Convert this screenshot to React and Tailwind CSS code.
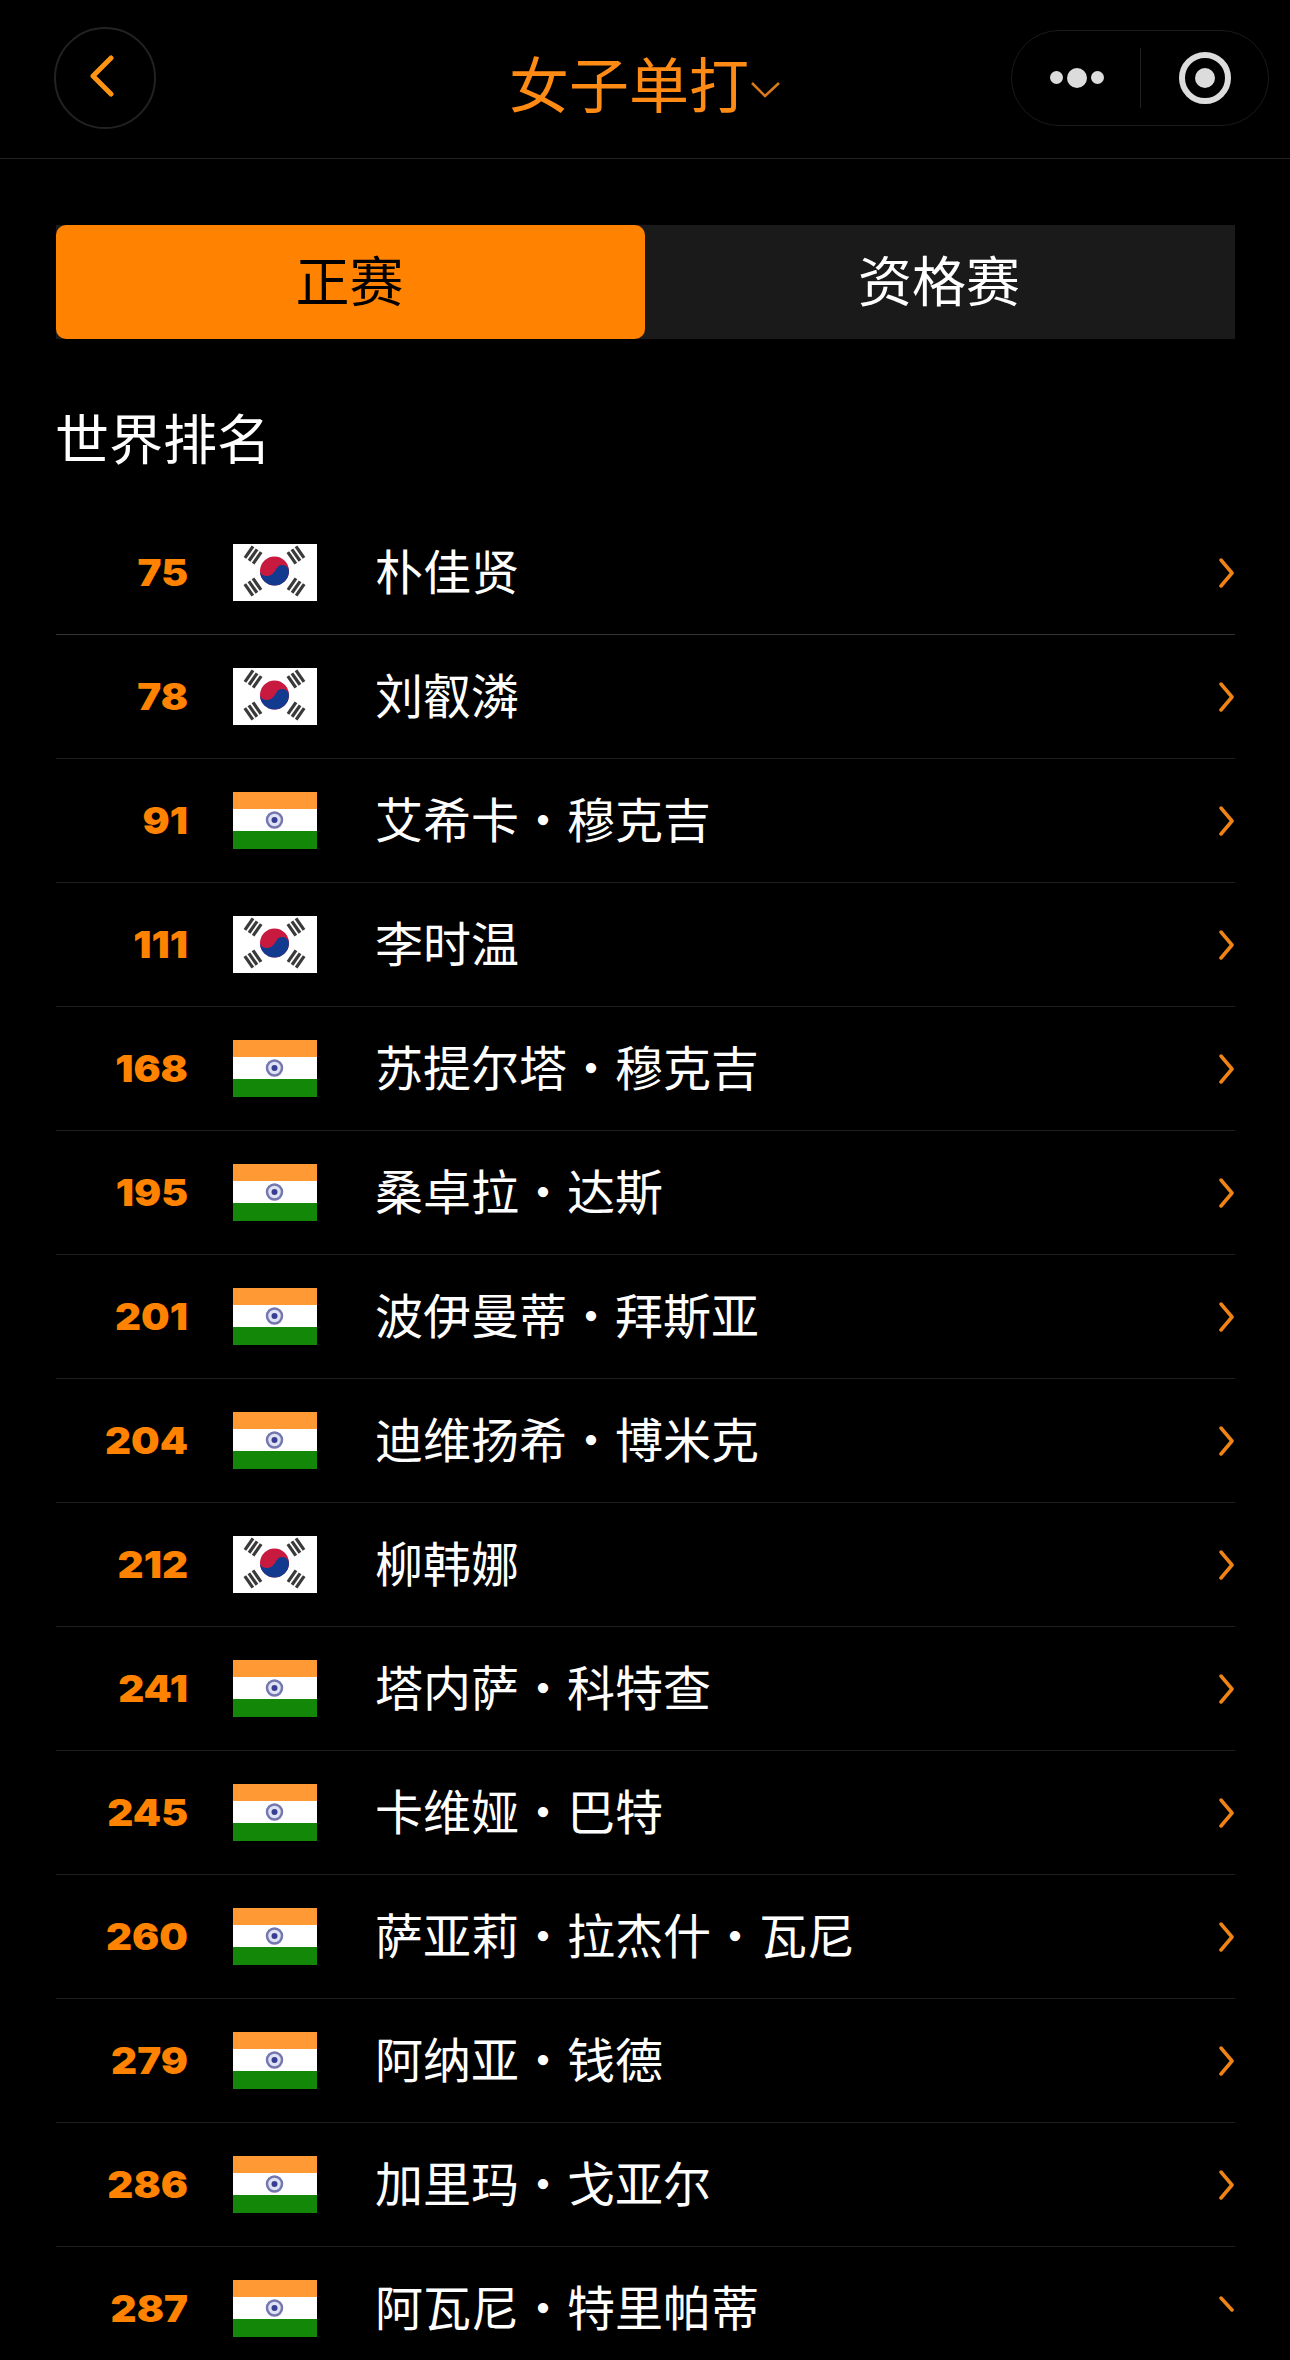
import React from 'react';

const players = [
  { rank: 75, flag: 'kr', name: '朴佳贤' },
  { rank: 78, flag: 'kr', name: '刘叡潾' },
  { rank: 91, flag: 'in', name: '艾希卡 · 穆克吉' },
  { rank: 111, flag: 'kr', name: '李时温' },
  { rank: 168, flag: 'in', name: '苏提尔塔 · 穆克吉' },
  { rank: 195, flag: 'in', name: '桑卓拉 · 达斯' },
  { rank: 201, flag: 'in', name: '波伊曼蒂 · 拜斯亚' },
  { rank: 204, flag: 'in', name: '迪维扬希 · 博米克' },
  { rank: 212, flag: 'kr', name: '柳韩娜' },
  { rank: 241, flag: 'in', name: '塔内萨 · 科特查' },
  { rank: 245, flag: 'in', name: '卡维娅 · 巴特' },
  { rank: 260, flag: 'in', name: '萨亚莉 · 拉杰什 · 瓦尼' },
  { rank: 279, flag: 'in', name: '阿纳亚 · 钱德' },
  { rank: 286, flag: 'in', name: '加里玛 · 戈亚尔' },
  { rank: 287, flag: 'in', name: '阿瓦尼 · 特里帕蒂' },
];

const cjk = { fontFamily: '"Noto Sans CJK SC", sans-serif' };

function Trigram({ x, y, angle }) {
  return (
    <g transform={`translate(${x} ${y}) rotate(${angle})`} fill="#3a3a3a">
      {[0, 1, 2].map((i) => (
        <rect key={i} x="-7" y={-6.5 + i * 5} width="14" height="3.2" />
      ))}
    </g>
  );
}

function KoreaFlag() {
  return (
    <svg width="84" height="57" viewBox="0 0 84 57" className="shrink-0">
      <rect width="84" height="57" fill="#fff" />
      <circle cx="41.5" cy="27" r="14.5" fill="#c8193f" />
      <path d="M27 27a14.5 14.5 0 0 0 29 0c0-3-3-6-7-6s-5 3-7 6-5 5-8 5-7-2-7-5z" fill="#123a8f" />
      <Trigram x={20} y={11} angle={-55} />
      <Trigram x={63} y={11} angle={55} />
      <Trigram x={20} y={43} angle={55} />
      <Trigram x={63} y={43} angle={-55} />
    </svg>
  );
}

function IndiaFlag() {
  return (
    <svg width="84" height="57" viewBox="0 0 84 57" className="shrink-0">
      <rect width="84" height="17" fill="#ff9933" />
      <rect y="17" width="84" height="22" fill="#fff" />
      <rect y="39" width="84" height="18" fill="#138808" />
      <circle cx="41.5" cy="28" r="7.5" fill="#dfe2f2" stroke="#7478ae" strokeWidth="2.5" />
      <circle cx="41.5" cy="28" r="3" fill="#3a3e92" />
    </svg>
  );
}

function RowChevron({ cut }) {
  return (
    <svg width="16" height="30" viewBox="0 0 16 30" className="ml-auto mr-[1px] shrink-0" fill="none" stroke="#ee8416" strokeWidth="3.5" strokeLinecap="round" strokeLinejoin="round">
      <path d={cut ? 'M3 4l11 12' : 'M3 2l11 13L3 28'} />
    </svg>
  );
}

function Name({ text }) {
  const parts = text.split(' · ');
  return (
    <span className="-ml-[1px] flex pb-[7px] text-[48px] leading-none text-white" style={cjk}>
      {parts.map((p, i) => (
        <React.Fragment key={i}>
          {i > 0 && <span className="w-[48px] text-center">·</span>}
          <span>{p}</span>
        </React.Fragment>
      ))}
    </span>
  );
}

function Row({ player, first, last }) {
  return (
    <div className={`flex h-[124px] items-center border-b ${first ? 'border-[#333333]' : 'border-[#1f1f1f]'}`}>
      <div className="w-[132px] shrink-0 origin-right scale-x-[1.09] text-right text-[37px] font-black text-[#ff8200] [font-family:Inter,sans-serif]">{player.rank}</div>
      <div className="ml-[45px] mr-[59px] shrink-0">
        {player.flag === 'kr' ? <KoreaFlag /> : <IndiaFlag />}
      </div>
      <Name text={player.name} />
      <RowChevron cut={last} />
    </div>
  );
}

export default function App() {
  return (
    <div className="h-[2360px] w-[1290px] overflow-hidden bg-black" style={cjk}>
      <header className="flex h-[159px] items-center border-b border-[#222222] pb-[3px]">
        <div className="ml-[54px] flex h-[102px] w-[102px] shrink-0 items-center justify-center rounded-full border-2 border-[#222222]">
          <svg width="28" height="42" viewBox="0 0 28 42" className="mr-[7px] mb-[3px]" fill="none" stroke="#ff9414" strokeWidth="5" strokeLinecap="round" strokeLinejoin="round">
            <path d="M23 3L5 21l18 18" />
          </svg>
        </div>
        <div className="ml-[353px] mt-[8px] flex items-center text-[60px] leading-none text-[#ff8a14]">
          <span>女子单打</span>
          <svg width="30" height="18" viewBox="0 0 30 18" className="ml-[2px] mt-[16px]" fill="none" stroke="#d9791a" strokeWidth="2.5">
            <path d="M1 2l13 13L28 2" />
          </svg>
        </div>
        <div className="ml-[230px] flex h-[96px] w-[258px] shrink-0 items-center rounded-full border border-[#1a1a1a]">
          <div className="flex w-[128px] items-center justify-center gap-[4px] pl-[2px]">
            <span className="h-[13px] w-[13px] rounded-full bg-[#dcdcdc]" />
            <span className="h-[20px] w-[20px] rounded-full bg-[#dcdcdc]" />
            <span className="h-[13px] w-[13px] rounded-full bg-[#dcdcdc]" />
          </div>
          <div className="h-[60px] w-px bg-[#222222]" />
          <div className="flex flex-1 items-center justify-center">
            <span className="flex h-[52px] w-[52px] items-center justify-center rounded-full border-[6px] border-[#dcdcdc]">
              <span className="h-[20px] w-[20px] rounded-full bg-[#dcdcdc]" />
            </span>
          </div>
        </div>
      </header>

      <main className="px-[56px]">
        <div className="mt-[66px] flex h-[114px] w-[1179px] bg-[#1a1a1a] text-[54px]">
          <div className="flex w-[589px] items-center justify-center rounded-[10px] bg-[#ff8200] pb-[8px] pr-[2px] text-black">正赛</div>
          <div className="flex flex-1 items-center justify-center pb-[8px] pr-[2px] text-white">资格赛</div>
        </div>
        <h2 className="-ml-[1px] flex h-[172px] items-center pt-[24px] text-[54px] font-normal leading-none text-white">世界排名</h2>
        <div className="w-[1179px]">
          {players.map((p, i) => (
            <Row key={p.rank} player={p} first={i === 0} last={i === players.length - 1} />
          ))}
        </div>
      </main>
    </div>
  );
}
